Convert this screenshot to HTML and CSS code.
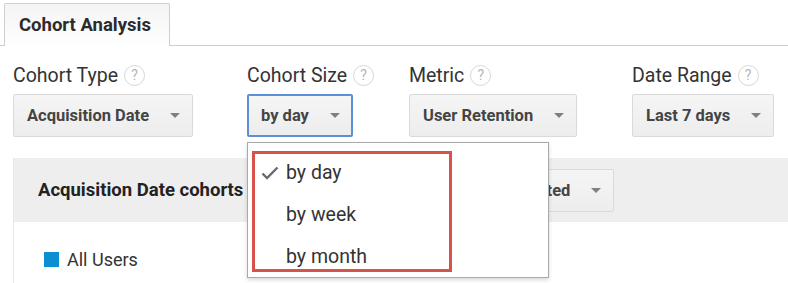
FILE: index.html
```html
<!DOCTYPE html>
<html lang="en">
<head>
    <meta charset="UTF-8">
    <meta name="viewport" content="width=device-width, initial-scale=1.0">
    <title>Cohort Analysis</title>
    <link rel="stylesheet" href="styles.css">
</head>
<body>

    <div class="tabs">
        <div class="tab">Cohort Analysis</div>
    </div>

    <div class="filters">
        <div class="filter">
            <div class="filter-label">Cohort Type <span class="help">?</span></div>
            <div class="select">Acquisition Date <span class="caret"></span></div>
        </div>
        <div class="filter">
            <div class="filter-label">Cohort Size <span class="help">?</span></div>
            <div class="select active">by day <span class="caret"></span></div>

            <div class="menu">
                <div class="menu-item selected">
                    <svg class="check" width="18" height="14" viewBox="0 0 18 14">
                        <path d="M1.5 7.5 L6 12 L16.5 1.5" fill="none" stroke="#6b6b6b" stroke-width="2.4"/>
                    </svg>
                    by day
                </div>
                <div class="menu-item">by week</div>
                <div class="menu-item">by month</div>
                <div class="highlight"></div>
            </div>
        </div>
        <div class="filter">
            <div class="filter-label">Metric <span class="help">?</span></div>
            <div class="select">User Retention <span class="caret"></span></div>
        </div>
        <div class="filter">
            <div class="filter-label">Date Range <span class="help">?</span></div>
            <div class="select">Last 7 days <span class="caret"></span></div>
        </div>
    </div>

    <div class="panel">
        <div class="panel-header">
            <div class="panel-title">Acquisition Date cohorts</div>
            <div class="select">Not Selected <span class="caret"></span></div>
        </div>
        <div class="panel-body">
            <div class="legend"><span class="swatch"></span>All Users</div>
        </div>
    </div>

</body>
</html>
```

FILE: styles.css
```css
body {
    font-family: 'Roboto', 'Liberation Sans', sans-serif;
    margin: 0;
    padding: 0;
    background-color: #fff;
    color: #333;
    overflow: hidden;
}

.tabs {
    display: flex;
    padding: 3px 0 0 4px;
    border-bottom: 1px solid #cfcfcf;
}

.tab {
    height: 42px;
    padding: 0 18px 0 14px;
    margin-bottom: -1px;
    display: flex;
    align-items: center;
    font-size: 18.5px;
    font-weight: bold;
    color: #2b2b2b;
    background: linear-gradient(#f4f4f4, #fff);
    border: 1px solid #cfcfcf;
    border-bottom: none;
    border-radius: 2px 2px 0 0;
}

.filters {
    display: grid;
    grid-template-columns: 234px 162px 223px auto;
    padding: 16px 0 0 13px;
}

.filter {
    position: relative;
    display: flex;
    flex-direction: column;
    align-items: flex-start;
}

.filter-label {
    display: flex;
    align-items: center;
    height: 26px;
    font-size: 19.5px;
    color: #333;
    margin-bottom: 6px;
}

.help {
    display: inline-flex;
    align-items: center;
    justify-content: center;
    width: 19px;
    height: 19px;
    margin-left: 6px;
    border: 1px solid #d6d6d6;
    border-radius: 50%;
    font-size: 14px;
    color: #b5b5b5;
}

.select {
    display: flex;
    align-items: center;
    height: 41px;
    padding: 0 12px 0 13px;
    font-size: 16.5px;
    font-weight: bold;
    color: #444;
    background: linear-gradient(#f5f5f5, #ededed);
    border: 1px solid #dadada;
    border-radius: 2px;
}

.select.active {
    border: 2px solid #5b8fd9;
    height: 39px;
    padding: 0 11px 0 12px;
}

.caret {
    width: 0;
    height: 0;
    margin-left: 21px;
    border-left: 5px solid transparent;
    border-right: 5px solid transparent;
    border-top: 5px solid #808080;
}

.menu {
    position: absolute;
    top: 80px;
    left: 0;
    width: 300px;
    height: 126px;
    padding-top: 8px;
    background-color: #fff;
    border: 1px solid #a9a9a9;
    box-shadow: 0 2px 4px rgba(0, 0, 0, 0.15);
    z-index: 10;
}

.menu-item {
    position: relative;
    height: 42px;
    display: flex;
    align-items: center;
    padding-left: 38px;
    font-size: 19.5px;
    color: #333;
}

.check {
    position: absolute;
    left: 13px;
    top: 15px;
}

.highlight {
    position: absolute;
    left: 4px;
    top: 8px;
    width: 194px;
    height: 115px;
    border: 3px solid #d6524b;
}

.panel {
    margin: 21px 0 0 13px;
    border-left: 1px solid #e8e8e8;
}

.panel-header {
    display: flex;
    align-items: center;
    height: 64px;
    padding-left: 24px;
    background-color: #eeeeee;
}

.panel-title {
    width: 423px;
    font-size: 18.5px;
    font-weight: bold;
    color: #222;
}

.panel-body {
    padding: 27px 0 20px 30px;
}

.legend {
    display: flex;
    align-items: center;
    font-size: 18px;
    color: #333;
}

.swatch {
    width: 15px;
    height: 15px;
    margin-right: 8px;
    background-color: #0b8fd3;
}
```
